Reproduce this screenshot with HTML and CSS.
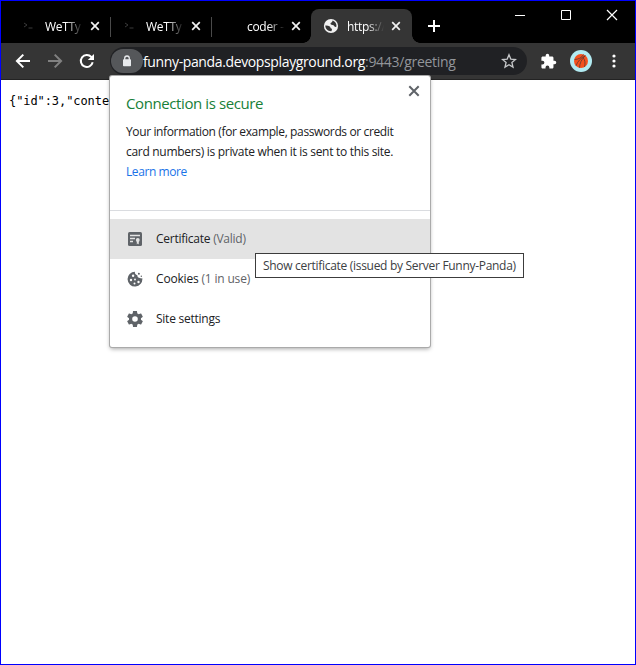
FILE: index.html
```html
<!DOCTYPE html>
<html lang="en">
<head>
<meta charset="utf-8">
<title>funny-panda.devopsplayground.org:9443/greeting</title>
<link rel="stylesheet" href="styles.css">
</head>
<body>
<div class="window">
  <header class="tabstrip">
    <div class="tab">
      <svg class="favicon" viewBox="0 0 16 16"><path d="M1 5l3 2-3 2M5.500 10h4" fill="none" stroke="#3a3a3a"/></svg>
      <span class="tab-title">WeTTy</span>
      <svg class="tab-close" viewBox="0 0 10 10"><path d="M1.200 1.200l7.600 7.600M8.800 1.200l-7.600 7.600"/></svg>
    </div>
    <div class="tab">
      <svg class="favicon" viewBox="0 0 16 16"><path d="M1 5l3 2-3 2M5.500 10h4" fill="none" stroke="#3a3a3a"/></svg>
      <span class="tab-title">WeTTy</span>
      <svg class="tab-close" viewBox="0 0 10 10"><path d="M1.200 1.200l7.600 7.600M8.800 1.200l-7.600 7.600"/></svg>
    </div>
    <div class="tab tab-plain">
      <span class="favicon"></span>
      <span class="tab-title">coder -</span>
      <svg class="tab-close" viewBox="0 0 10 10"><path d="M1.200 1.200l7.600 7.600M8.800 1.200l-7.600 7.600"/></svg>
    </div>
    <div class="tab tab-active">
      <svg class="favicon" viewBox="0 0 16 16"><circle cx="8" cy="8" r="7.100" fill="#f1f1f1"/><path d="M2.300 7.600c1.700-.1 3.300.1 4.500.9 1 .7.300 1.700 1.500 2 1 .3.700 1.400.1 2.800-3.500.2-6.100-2.300-6.100-5.700zM9.700 2.600c2.500.9 4 3.200 3.800 5.900-.9.800-1.900.3-2.300-.6-.6-1.300-2.700-.6-3.500-1.700-.7-1.100.4-1.500 1.200-2 .6-.4.300-1.100.8-1.600z" fill="#353535"/></svg>
      <span class="tab-title">https://</span>
      <svg class="tab-close" viewBox="0 0 10 10"><path d="M1.200 1.200l7.600 7.600M8.800 1.200l-7.600 7.600"/></svg>
    </div>
    <svg class="new-tab" viewBox="0 0 12 12"><path d="M6 0v12M0 6h12" stroke="#fff" stroke-width="2"/></svg>
    <div class="controls">
      <svg viewBox="0 0 12 12"><path d="M1 6.500h10"/></svg>
      <svg viewBox="0 0 12 12"><path d="M1.500 1.500h9v9h-9z"/></svg>
      <svg viewBox="0 0 12 12"><path d="M1 1l10 10M11 1L1 11" stroke-width="1.200"/></svg>
    </div>
  </header>

  <nav class="toolbar">
    <svg class="nav-icon" viewBox="0 0 16 16"><path d="M15 8H2M8.300 1.600L1.900 8l6.400 6.400"/></svg>
    <svg class="nav-icon nav-off" viewBox="0 0 16 16"><path d="M1 8h13M7.700 1.600L14.100 8l-6.400 6.400"/></svg>
    <svg class="nav-icon" viewBox="0 0 16 16"><path d="M13.700 9.300A6 6 0 1 1 12.300 3.900L13.600 5.200"/><path d="M15 .9v6.200H8.800z" fill="#fff" stroke="none"/></svg>
    <div class="omnibox">
      <span class="lock"><svg viewBox="0 0 10 12"><path d="M2.700 5V3.300a2.300 2.300 0 0 1 4.600 0V5" fill="none" stroke="#e8eaed" stroke-width="1.300"/><rect x="1" y="4.300" width="8" height="7" rx=".8" fill="#e8eaed"/></svg></span>
      <span class="url"><b>funny-panda.devopsplayground.org</b><i>:9443/greeting</i></span>
      <svg class="star" viewBox="0 0 16 16"><path d="M8 1.800l1.800 4.300 4.700.4-3.600 3 1.100 4.600L8 11.700l-4 2.400 1.100-4.600-3.600-3 4.700-.4z" fill="none" stroke="#c6c8ca" stroke-width="1.300"/></svg>
    </div>
    <svg class="puzzle" viewBox="0 0 24 24"><path fill="#fff" d="M20.500 11H19V7c0-1.100-.9-2-2-2h-4V3.500a2.500 2.500 0 0 0-5 0V5H4c-1.100 0-2 .9-2 2v3.800h1.500a2.700 2.700 0 0 1 0 5.400H2V20c0 1.100.9 2 2 2h3.800v-1.500a2.700 2.700 0 0 1 5.400 0V22H17c1.100 0 2-.9 2-2v-4h1.500a2.500 2.500 0 0 0 0-5z"/></svg>
    <svg class="avatar" viewBox="0 0 22 22"><circle cx="11" cy="11" r="11" fill="#b2ebf2"/><circle cx="11" cy="11" r="7" fill="#f4511e"/><path d="M4.500 9.500c4-.2 7-1.500 9-5M6 15.800c1.500-4.500 5-8 9.500-10.200M9.500 17.800c.2-4.500 2-8.500 5.500-12M14.500 17c1-4 .5-7-1.500-9.500" fill="none" stroke="#5d3a32" stroke-width=".8"/></svg>
    <svg class="menu" viewBox="0 0 4 16"><circle cx="2" cy="3" r="1.600"/><circle cx="2" cy="8" r="1.600"/><circle cx="2" cy="13" r="1.600"/></svg>
  </nav>

  <main class="page"><pre class="json">{"id":3,"conte</pre></main>

  <section class="popup">
    <div class="popup-head">
      <h1>Connection is secure</h1>
      <svg class="popup-close" viewBox="0 0 12 12"><path d="M1.300 1.300l9.400 9.400M10.700 1.300l-9.400 9.400" stroke="#5f6368" stroke-width="2"/></svg>
      <p><span class="line-a">Your information (for example, passwords or credit</span><br><span class="line-b">card numbers) is private when it is sent to this site.</span><br><a>Learn more</a></p>
    </div>
    <ul class="rows">
      <li class="row-hover">
        <svg viewBox="0 0 16 16"><rect x="1" y="1" width="14" height="14" rx="1.500" fill="#5f6368"/><path d="M3 4.500h10M3 7.500h5M3 10.500h3" stroke="#e3e3e3" stroke-width="1.300"/><circle cx="10.800" cy="9" r="1.900" fill="#e3e3e3"/><path d="M9.800 10h2v3.400l-1-.8-1 .8z" fill="#e3e3e3"/></svg>
        <span class="cert">Certificate <em>(Valid)</em></span>
      </li>
      <li>
        <svg viewBox="0 0 16 16"><path d="M8 .7a2.700 2.700 0 0 0 2.400 3.500A2.500 2.500 0 0 0 13 7.100c.8.400 1.600.3 2.300.1A7.400 7.400 0 1 1 8 .7z" fill="#5f6368"/><circle cx="11.900" cy="2.700" r="1" fill="#5f6368"/><circle cx="14.300" cy="5.200" r=".7" fill="#5f6368"/><g fill="#fff"><circle cx="6.100" cy="4.800" r="1.200"/><circle cx="4" cy="9" r="1.200"/><circle cx="8" cy="8.500" r=".9"/><circle cx="7.500" cy="12.500" r="1"/><circle cx="11.500" cy="11" r="1.200"/></g></svg>
        <span class="cookies">Cookies <em>(1 in use)</em></span>
      </li>
      <li>
        <svg class="gear" viewBox="2 2 20 20"><path fill="#5f6368" d="M19.430 12.980c.04-.32.070-.64.070-.98s-.03-.66-.07-.98l2.110-1.650c.19-.15.240-.42.120-.64l-2-3.460c-.12-.22-.39-.3-.61-.22l-2.490 1c-.52-.4-1.080-.73-1.690-.98l-.38-2.650C14.460 2.180 14.250 2 14 2h-4c-.25 0-.46.180-.49.420l-.38 2.650c-.61.250-1.170.590-1.690.98l-2.490-1c-.23-.09-.49 0-.61.220l-2 3.460c-.13.220-.07.490.120.640l2.110 1.650c-.04.320-.07.650-.07.980s.03.660.070.980l-2.110 1.650c-.19.150-.24.420-.12.640l2 3.460c.12.220.390.300.610.220l2.490-1c.52.400 1.080.730 1.690.980l.38 2.650c.03.240.240.420.490.420h4c.25 0 .46-.18.490-.42l.38-2.650c.61-.25 1.170-.59 1.690-.98l2.490 1c.23.090.490 0 .61-.22l2-3.460c.12-.22.070-.49-.12-.64l-2.110-1.650zM12 15.500a3.500 3.500 0 1 1 0-7 3.500 3.500 0 0 1 0 7z"/></svg>
        <span class="settings">Site settings</span>
      </li>
    </ul>
  </section>
  <div class="tooltip"><span>Show certificate (issued by Server Funny-Panda)</span></div>
</div>
</body>
</html>
```
FILE: styles.css
```css
* { box-sizing: border-box; }
body {
  margin: 0;
  font-family: "Open Sans", "Noto Sans", sans-serif;
  font-size: 12px;
  color: #202124;
}
svg { display: block; flex: none; }
.window {
  position: relative;
  display: flex;
  flex-direction: column;
  width: 636px;
  height: 665px;
  border: 1px solid #00f;
  background: #fff;
  overflow: hidden;
}
.tabstrip {
  display: flex;
  flex: none;
  height: 42px;
  padding-left: 9px;
  background: #000;
}
.tab {
  position: relative;
  display: flex;
  align-items: center;
  width: 101px;
  height: 34px;
  margin-top: 8px;
  padding-left: 13px;
  color: #fff;
}
.tab::after {
  content: "";
  position: absolute;
  right: 0;
  top: 8px;
  width: 1px;
  height: 20px;
  background: #4a4a4a;
}
.tab-plain::after { display: none; }
.favicon { width: 16px; height: 16px; flex: none; }
.tab-title {
  width: 38px;
  margin-left: 6px;
  overflow: hidden;
  white-space: nowrap;
  letter-spacing: -0.3px;
  -webkit-mask-image: linear-gradient(90deg, #000 55%, transparent 100%);
  mask-image: linear-gradient(90deg, #000 55%, transparent 100%);
}
.tab-close { width: 10px; height: 10px; margin-left: 7px; }
.tab-plain .tab-close { margin-left: 6px; }
.tab-close path { stroke: #f1f1f1; stroke-width: 1.7; }
.tab-active {
  margin-left: -2px;
  width: 101px;
  padding-left: 12px;
  border-radius: 8px 8px 0 0;
  background: #353535;
}
.tab-active .tab-title { margin-left: 8px; width: 37px; }
.tab-active::before, .tab-active::after {
  content: "";
  position: absolute;
  top: auto;
  bottom: 0;
  width: 8px;
  height: 8px;
}
.tab-active::before { left: -8px; background: radial-gradient(circle at 0 0, #000 7.5px, #353535 8px); }
.tab-active::after { right: -8px; background: radial-gradient(circle at 100% 0, #000 7.5px, #353535 8px); }
.new-tab { width: 12px; height: 12px; margin: 19px 0 0 16px; }
.controls { display: flex; gap: 34px; margin: 8px 0 0 74px; }
.controls svg { width: 12px; height: 12px; fill: none; stroke: #fff; }
.toolbar {
  display: flex;
  align-items: center;
  flex: none;
  height: 37px;
  padding-left: 14px;
  border-bottom: 1px solid #232323;
  background: #353535;
}
.nav-icon { width: 16px; height: 16px; margin-right: 16px; fill: none; stroke: #fff; stroke-width: 2; }
.nav-off { stroke: #818181; }
.omnibox {
  display: flex;
  align-items: center;
  width: 417px;
  height: 28px;
  margin-left: -1px;
  padding-left: 1px;
  border-radius: 14px;
  background: #202124;
}
.lock {
  display: grid;
  place-items: center;
  width: 32px;
  height: 24px;
  border-radius: 12px;
  background: #55575a;
}
.lock svg { width: 10px; height: 12px; }
.url { width: 357px; white-space: nowrap; font-size: 14px; color: #fff; }
.url b { font-weight: 400; letter-spacing: -0.37px; }
.url i { font-style: normal; color: #92959a; letter-spacing: -0.28px; }
.star { width: 16px; height: 16px; margin-left: 1px; }
.puzzle { width: 17px; height: 17px; margin-left: 13px; }
.avatar { width: 22px; height: 22px; margin-left: 13px; }
.menu { width: 4px; height: 16px; margin-left: 19.5px; fill: #fff; }
.page { padding: 13px 8px; }
.json {
  margin: 0;
  font: 12px/16px "DejaVu Sans Mono", monospace;
  letter-spacing: -0.08px;
  color: #000;
}
.popup {
  position: absolute;
  left: 109px;
  top: 75px;
  width: 320px;
  height: 271px;
  border-radius: 2px;
  background: #fff;
  box-shadow: 0 0 0 1px #aaa, 0 2px 4px rgba(0, 0, 0, .35);
}
.popup-head {
  position: relative;
  height: 135px;
  padding: 16px 16px 0;
  border-bottom: 1px solid #dadce0;
}
.popup h1 {
  margin: 0;
  font-size: 15px;
  font-weight: 400;
  line-height: 22px;
  letter-spacing: -0.4px;
  color: #188038;
}
.popup-close { position: absolute; right: 10px; top: 9px; width: 12px; height: 12px; }
.popup p { margin: 8px 0 0; line-height: 20px; white-space: nowrap; }
.line-a { letter-spacing: -0.37px; }
.line-b { letter-spacing: -0.3px; }
.popup a { color: #1a73e8; letter-spacing: -0.42px; }
.rows { margin: 8px 0 0; padding: 0; list-style: none; }
.rows li { display: flex; align-items: center; height: 40px; padding-left: 17px; }
.rows svg { width: 16px; height: 16px; margin-right: 13px; }
.rows span { padding-bottom: 2px; letter-spacing: -0.25px; }
.rows em { font-style: normal; color: #5f6368; }
.rows .cookies { letter-spacing: -0.18px; }
.row-hover { background: #e3e3e3; }
.tooltip {
  position: absolute;
  left: 254px;
  top: 252px;
  width: 269px;
  height: 25px;
  padding-left: 7px;
  border: 1px solid #3c3c3c;
  background: #fff;
  color: #3c4043;
  letter-spacing: -0.3px;
  line-height: 23px;
  white-space: nowrap;
}
```
